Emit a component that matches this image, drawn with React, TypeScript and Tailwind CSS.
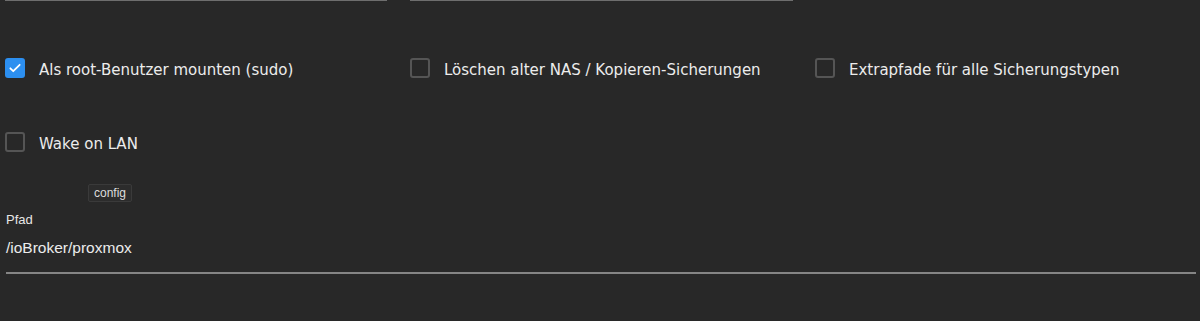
import React from "react";

const Box = ({ checked }: { checked?: boolean }) =>
  checked ? (
    <span className="w-[20px] h-[20px] rounded-[3px] bg-[#2c8ff0] flex items-center justify-center shrink-0">
      <svg width="14" height="14" viewBox="0 0 24 24" fill="none" stroke="white" strokeWidth="3" strokeLinecap="round" strokeLinejoin="round">
        <path d="M4 12.5l5 5L20 6.5" />
      </svg>
    </span>
  ) : (
    <span className="w-[20px] h-[20px] rounded-[3px] border-2 border-[#555555] shrink-0"></span>
  );

const Option = ({ label, checked }: { label: string; checked?: boolean }) => (
  <label className="flex items-center gap-[14px] h-[20px]">
    <Box checked={checked} />
    <span className="mt-[4px] text-[15px] text-[#ececec] whitespace-nowrap">{label}</span>
  </label>
);

export default function App() {
  return (
    <div className="w-[1200px] h-[321px] bg-[#282828] overflow-hidden font-['DejaVu_Sans',sans-serif]">
      <div className="grid grid-cols-[405px_405px_1fr] pl-[5px]">
        <div className="w-[382px] h-[1px] bg-[#6e6e6e]"></div>
        <div className="w-[383px] h-[1px] bg-[#6e6e6e]"></div>
      </div>

      <div className="grid grid-cols-[405px_405px_1fr] pl-[5px] mt-[57px]">
        <Option label="Als root-Benutzer mounten (sudo)" checked />
        <Option label="Löschen alter NAS / Kopieren-Sicherungen" />
        <Option label="Extrapfade für alle Sicherungstypen" />
      </div>

      <div className="pl-[5px] mt-[54px]">
        <Option label="Wake on LAN" />
      </div>

      <div className="flex pl-[88px] mt-[32px]">
        <div className="flex items-center justify-center h-[18px] w-[44px] bg-[#2c2c2c] border border-[#3a3a3a] rounded-[2px] text-[12px] text-[#dddddd] font-['Liberation_Sans',sans-serif]">
          config
        </div>
      </div>

      <div className="pl-[6px] pr-[4px] mt-[10px] font-['Liberation_Sans',sans-serif]">
        <div className="text-[13px] leading-[16px] text-[#e6e6e6]">Pfad</div>
        <div className="h-[46px] flex items-end pb-[15px] text-[15.5px] leading-[18px] text-[#ececec] border-b-2 border-[#858585]">
          /ioBroker/proxmox
        </div>
      </div>
    </div>
  );
}
